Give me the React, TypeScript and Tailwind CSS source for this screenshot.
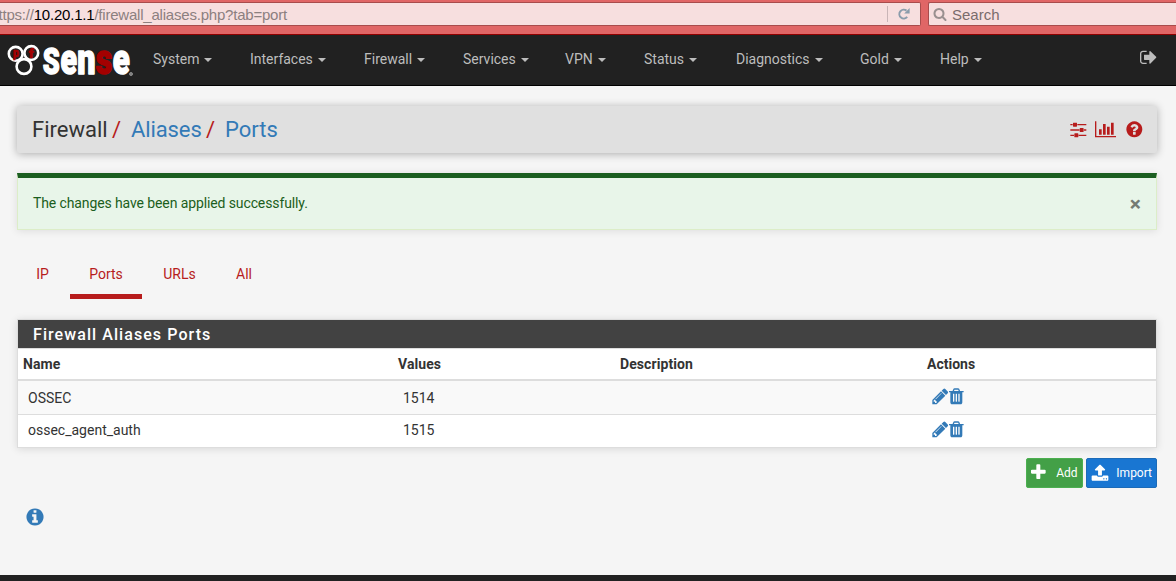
import React from "react";

const CIRCLE =
  "M1664 896q0 209-103 385.5t-279.5 279.5-385.5 103-385.5-103-279.5-279.5-103-385.5 103-385.5 279.5-279.5 385.5-103 385.5 103 279.5 279.5 103 385.5z";

const icons = {
  signOut:
    "M640 1440q0 4 1 20t.5 26.5-3 23.5-10 19.5-20.5 6.5h-320q-119 0-203.5-84.5t-84.5-203.5v-704q0-119 84.5-203.5t203.5-84.5h320q13 0 22.5 9.5t9.5 22.5q0 4 1 20t.5 26.5-3 23.5-10 19.5-20.5 6.5h-320q-66 0-113 47t-47 113v704q0 66 47 113t113 47h312l11.5 1 11.5 3 8 5.5 7 9 2 13.5zm928-544q0 26-19 45l-544 544q-19 19-45 19t-45-19-19-45v-288h-448q-26 0-45-19t-19-45v-384q0-26 19-45t45-19h448v-288q0-26 19-45t45-19 45 19l544 544q19 19 19 45z",
  sliders:
    "M480 1408v128h-352v-128h352zm352-128q26 0 45 19t19 45v256q0 26-19 45t-45 19h-256q-26 0-45-19t-19-45v-256q0-26 19-45t45-19h256zm160-384v128h-864v-128h864zm-640-512v128h-224v-128h224zm1312 1024v128h-736v-128h736zm-960-1152q26 0 45 19t19 45v256q0 26-19 45t-45 19h-256q-26 0-45-19t-19-45v-256q0-26 19-45t45-19h256zm640 512q26 0 45 19t19 45v256q0 26-19 45t-45 19h-256q-26 0-45-19t-19-45v-256q0-26 19-45t45-19h256zm320 128v128h-224v-128h224zm0-512v128h-864v-128h864z",
  chart:
    "M640 896v512h-256v-512h256zm384-512v1024h-256v-1024h256zm1024 1152v128h-2048v-1536h128v1408h1920zm-640-896v768h-256v-768h256zm384-384v1152h-256v-1152h256z",
  question:
    "M1024 1376v-192q0-14-9-23t-23-9h-192q-14 0-23 9t-9 23v192q0 14 9 23t23 9h192q14 0 23-9t9-23zm256-672q0-88-55.5-163t-138.5-116-170-41q-243 0-371 213-15 24 8 42l132 100q7 6 19 6 16 0 25-12 53-68 86-92 34-24 86-24 48 0 85.5 26t37.5 59q0 38-20 61t-68 45q-63 28-115.5 86.5t-52.5 125.5v36q0 14 9 23t23 9h192q14 0 23-9t9-23q0-19 21.5-49.5t54.5-49.5q32-18 49-28.5t46-35 44.5-48 28-60.5 12.5-81z" +
    CIRCLE,
  info:
    "M1152 1376v-160q0-14-9-23t-23-9h-96v-512q0-14-9-23t-23-9h-320q-14 0-23 9t-9 23v160q0 14 9 23t23 9h96v320h-96q-14 0-23 9t-9 23v160q0 14 9 23t23 9h448q14 0 23-9t9-23zm-128-896v-160q0-14-9-23t-23-9h-192q-14 0-23 9t-9 23v160q0 14 9 23t23 9h192q14 0 23-9t9-23z" +
    CIRCLE,
  pencil:
    "M491 1536l91-91-235-235-91 91v107h128v128h107zm523-928q0-22-22-22-10 0-17 7l-542 542q-7 7-7 17 0 22 22 22 10 0 17-7l542-542q7-7 7-17zm-54-192l416 416-832 832h-416v-416zm683 96q0 53-37 90l-166 166-416-416 166-165q36-38 90-38 53 0 91 38l235 234q37 39 37 91z",
  trash:
    "M704 1376v-704q0-14-9-23t-23-9h-64q-14 0-23 9t-9 23v704q0 14 9 23t23 9h64q14 0 23-9t9-23zm256 0v-704q0-14-9-23t-23-9h-64q-14 0-23 9t-9 23v704q0 14 9 23t23 9h64q14 0 23-9t9-23zm256 0v-704q0-14-9-23t-23-9h-64q-14 0-23 9t-9 23v704q0 14 9 23t23 9h64q14 0 23-9t9-23zm-544-992h448l-48-117q-7-9-17-11h-317q-10 2-17 11zm928 32v64q0 14-9 23t-23 9h-96v948q0 83-47 143.5t-113 60.5h-832q-66 0-113-58.5t-47-141.5v-952h-96q-14 0-23-9t-9-23v-64q0-14 9-23t23-9h309l70-167q15-37 54-63t79-26h320q40 0 79 26t54 63l70 167h309q14 0 23 9t9 23z",
  plus:
    "M1600 736v192q0 40-28 68t-68 28h-416v416q0 40-28 68t-68 28h-192q-40 0-68-28t-28-68v-416h-416q-40 0-68-28t-28-68v-192q0-40 28-68t68-28h416v-416q0-40 28-68t68-28h192q40 0 68 28t28 68v416h416q40 0 68 28t28 68z",
  upload:
    "M1344 1472q0-26-19-45t-45-19-45 19-19 45 19 45 45 19 45-19 19-45zm256 0q0-26-19-45t-45-19-45 19-19 45 19 45 45 19 45-19 19-45zm128-224v320q0 40-28 68t-68 28h-1472q-40 0-68-28t-28-68v-320q0-40 28-68t68-28h427q21 56 70.5 92t110.5 36h256q61 0 110.5-36t70.5-92h427q40 0 68 28t28 68zm-325-648q-17 40-59 40h-256v448q0 26-19 45t-45 19h-256q-26 0-45-19t-19-45v-448h-256q-42 0-59-40-17-39 14-69l448-448q18-19 45-19t45 19l448 448q31 30 14 69z",
  search:
    "M1216 832q0-185-131.5-316.5t-316.5-131.5-316.5 131.5-131.5 316.5 131.5 316.5 316.5 131.5 316.5-131.5 131.5-316.5zm512 832q0 52-38 90t-90 38q-54 0-90-38l-343-342q-179 124-399 124-143 0-273.5-55.5t-225-150-150-225-55.5-273.5 55.5-273.5 150-225 225-150 273.5-55.5 273.5 55.5 225 150 150 225 55.5 273.5q0 220-124 399l343 343q37 37 37 90z",
};

function Icon({ name, className, wide = false }: { name: keyof typeof icons; className: string; wide?: boolean }) {
  return (
    <svg viewBox={wide ? "0 0 2048 1792" : "0 0 1792 1792"} className={`shrink-0 ${className}`} fill="currentColor" fillRule="evenodd" aria-hidden="true">
      <path d={icons[name]} />
    </svg>
  );
}

function Logo() {
  return (
    <svg width="128" height="36" viewBox="0 0 128 36" className="shrink-0 overflow-visible">
      <g fill="none" stroke="#fff" strokeWidth="2.6">
        <circle cx="8.7" cy="9.8" r="6.9" />
        <circle cx="24.3" cy="9" r="6.9" />
        <circle cx="17" cy="22.5" r="7.4" />
      </g>
      <g fill="#a40000" stroke="#a40000" strokeWidth=".6" fontFamily="Roboto, sans-serif" fontWeight="900">
        <text x="6" y="12.5" fontSize="12" textLength="6" lengthAdjust="spacingAndGlyphs">p</text>
        <text x="21.8" y="13.5" fontSize="12" textLength="5" lengthAdjust="spacingAndGlyphs">f</text>
      </g>
      <text y="30" fontFamily="Roboto, sans-serif" fontWeight="900" fontSize="42" fill="#fff" stroke="#fff" strokeWidth="1.5" strokeLinejoin="round">
        <tspan x="35.8" fontSize="37.5" textLength="17" lengthAdjust="spacingAndGlyphs">S</tspan>
        <tspan x="53.5" textLength="16.5" lengthAdjust="spacingAndGlyphs">e</tspan>
        <tspan x="70.3" textLength="18.3" lengthAdjust="spacingAndGlyphs">n</tspan>
        <tspan x="88.8" textLength="16.5" lengthAdjust="spacingAndGlyphs" fill="#a40000" stroke="#a40000">s</tspan>
        <tspan x="105.8" textLength="17" lengthAdjust="spacingAndGlyphs">e</tspan>
      </text>
      <circle cx="124" cy="30" r="1.5" fill="#777" stroke="#aaa" strokeWidth=".7" />
    </svg>
  );
}

const menus = [
  { label: "System", width: "w-[97px]" },
  { label: "Interfaces", width: "w-[114px]" },
  { label: "Firewall", width: "w-[99px]" },
  { label: "Services", width: "w-[102px]" },
  { label: "VPN", width: "w-[79px]" },
  { label: "Status", width: "w-[92px]" },
  { label: "Diagnostics", width: "w-[124px]" },
  { label: "Gold", width: "w-[80px]" },
  { label: "Help", width: "w-[80px]" },
];

const tabs = [
  { label: "IP", width: "w-[51px] mr-[2px]", active: false },
  { label: "Ports", width: "w-[72px]", active: true },
  { label: "URLs", width: "w-[75px]", active: false },
  { label: "All", width: "w-[54px]", active: false },
];

const aliases = [
  { name: "OSSEC", value: "1514", row: "h-[33px] bg-[#f9f9f9]", cell: "pt-0", actions: "pb-[3px]" },
  { name: "ossec_agent_auth", value: "1515", row: "h-[33px] border-t border-[#ddd] bg-white", cell: "pb-[3px]", actions: "pb-[3px]" },
];

const columns = "grid grid-cols-[375px_222px_307px_1fr] items-center";

export default function App() {
  return (
    <div className="flex h-[581px] w-[1176px] flex-col overflow-hidden bg-[#f5f5f5] font-[Roboto,sans-serif] text-[14px] leading-5 text-[#333]">
      <div className="flex h-[35px] shrink-0 items-start gap-[7px] border-b border-[#8f0000] bg-[#e06666] pt-[2px] font-['Liberation_Sans',sans-serif] text-[15px]">
        <div className="flex h-6 w-[921px] items-center rounded-r-[2px] border border-l-0 border-[#a84c4c] bg-[#f7dfdf]">
          <div className="-ml-[1.5px] grow whitespace-nowrap pt-[2px] tracking-[-0.21px] text-[#8c8080]">
            ttps://<span className="text-black">10.20.1.1</span>/firewall_aliases.php?tab=port
          </div>
          <div className="flex h-4 w-[33px] items-center border-l border-[#c9b5b7] pl-[10px]">
            <svg width="12" height="12" viewBox="0 0 12 12" fill="none">
              <path d="M9.2 8.8A4.4 4.4 0 1 1 8.5 2.6" stroke="#8b9cab" strokeWidth="2" />
              <path d="M11.6 0v5.6H6.2z" fill="#8b9cab" />
            </svg>
          </div>
        </div>
        <div className="flex h-6 grow items-center gap-[5px] rounded-l-[2px] border border-r-0 border-[#a84c4c] bg-[#f7dfdf] pl-[4px] text-[#7a6c6c]">
          <Icon name="search" className="-mt-px size-[14px] text-[#9a9090]" />
          <span className="pt-[2px]">Search</span>
        </div>
      </div>

      <nav className="flex h-[51px] shrink-0 items-start border-b border-black bg-[#212121] pl-[7px] pr-[17px] text-[#bdbdbd]">
        <div className="flex w-[146px] pt-[9px]">
          <Logo />
        </div>
        {menus.map((m) => (
          <a key={m.label} className={`flex shrink-0 items-center whitespace-nowrap pt-[14px] ${m.width}`}>
            {m.label}
            <span className="ml-[5px] mt-[2px] border-x-4 border-t-4 border-x-transparent border-t-[#bdbdbd]" />
          </a>
        ))}
        <Icon name="signOut" className="ml-auto mt-[13px] size-[18.67px]" />
      </nav>

      <main className="flex grow flex-col pl-[17px] pr-[19px] pt-5">
        <header className="flex h-[47px] items-center justify-between rounded-[2px] bg-[#e0e0e0] px-[15px] text-[22px] shadow-[0_1px_8px_rgba(0,0,0,0.3)]">
          <div className="flex whitespace-pre">
            <span className="w-[75px]">Firewall</span>
            <span className="w-6 pl-[5px] text-[#b71c1c]">/</span>
            <span className="w-[70px] tracking-[-0.1px] text-[#337ab7]">Aliases</span>
            <span className="w-6 pl-[5px] text-[#b71c1c]">/</span>
            <span className="text-[#337ab7]">Ports</span>
          </div>
          <div className="flex items-center text-[#b71c1c]">
            <Icon name="sliders" className="mr-[7px] size-[18.67px]" />
            <Icon name="chart" wide className="mr-[9px] h-[18.67px] w-[21.33px]" />
            <Icon name="question" className="-mr-[2px] size-[18.67px]" />
          </div>
        </header>

        <div className="mt-5 flex h-[57px] items-center justify-between border border-t-[5px] border-[#dcedc8] border-t-[#1b5e20] bg-[#e8f5e9] px-[15px] text-[#1b5e20] shadow-[0_1px_8px_rgba(0,0,0,0.1)]">
          <span className="pb-[2px] tracking-[-0.11px]">The changes have been applied successfully.</span>
          <span className="pt-px text-[21px] font-bold leading-none text-[#747b74]">×</span>
        </div>

        <div className="mt-[19px] flex h-[50px]">
          {tabs.map((t) => (
            <a
              key={t.label}
              className={`flex items-start justify-center border-b-[5px] pt-[15px] text-[#b71c1c] ${t.width} ${t.active ? "border-[#b71c1c]" : "border-transparent"}`}
            >
              {t.label}
            </a>
          ))}
        </div>

        <section className="mt-5 border border-[#ddd] bg-white shadow-[0_1px_8px_rgba(0,0,0,0.12)]">
          <h2 className="flex h-7 items-center bg-[#424242] pl-[15px] pt-[2px] text-[16px] font-medium tracking-[1.07px] text-white">Firewall Aliases Ports</h2>
          <div className={`h-[33px] border-b-2 border-t border-[#ddd] font-bold tracking-[0.08px] ${columns}`}>
            <span className="pl-[5px]">Name</span>
            <span className="pl-[5px]">Values</span>
            <span className="pl-[5px]">Description</span>
            <span className="pl-[5px] tracking-normal">Actions</span>
          </div>
          {aliases.map((a) => (
            <div key={a.name} className={`${columns} ${a.row}`}>
              <span className={`pl-[10px] ${a.cell}`}>{a.name}</span>
              <span className={`pl-[10px] ${a.cell}`}>{a.value}</span>
              <span />
              <span className={`flex pl-[8.5px] text-[#337ab7] ${a.actions}`}>
                <Icon name="pencil" className="-mr-px size-[18.67px]" />
                <Icon name="trash" className="-ml-px size-[18.67px]" />
              </span>
            </div>
          ))}
        </section>

        <div className="mt-[10px] flex justify-end gap-[3px] text-[12px] text-white">
          <button className="flex h-[30px] w-[57px] items-center justify-between rounded-[2px] border border-[#4caf50] bg-[#43a047] pb-px pl-[2px] pr-[4.5px]">
            <Icon name="plus" className="size-[18.67px]" />
            Add
          </button>
          <button className="flex h-[30px] w-[71px] items-center justify-between rounded-[2px] border border-[#1c6bb8] bg-[#1976d2] pb-px pl-[3.5px] pr-[4px]">
            <Icon name="upload" className="size-[18px]" />
            Import
          </button>
        </div>

        <Icon name="info" className="ml-[8.4px] mt-[19.3px] size-[20px] text-[#337ab7]" />
      </main>

      <footer className="h-[6px] shrink-0 bg-[#212121]" />
    </div>
  );
}
